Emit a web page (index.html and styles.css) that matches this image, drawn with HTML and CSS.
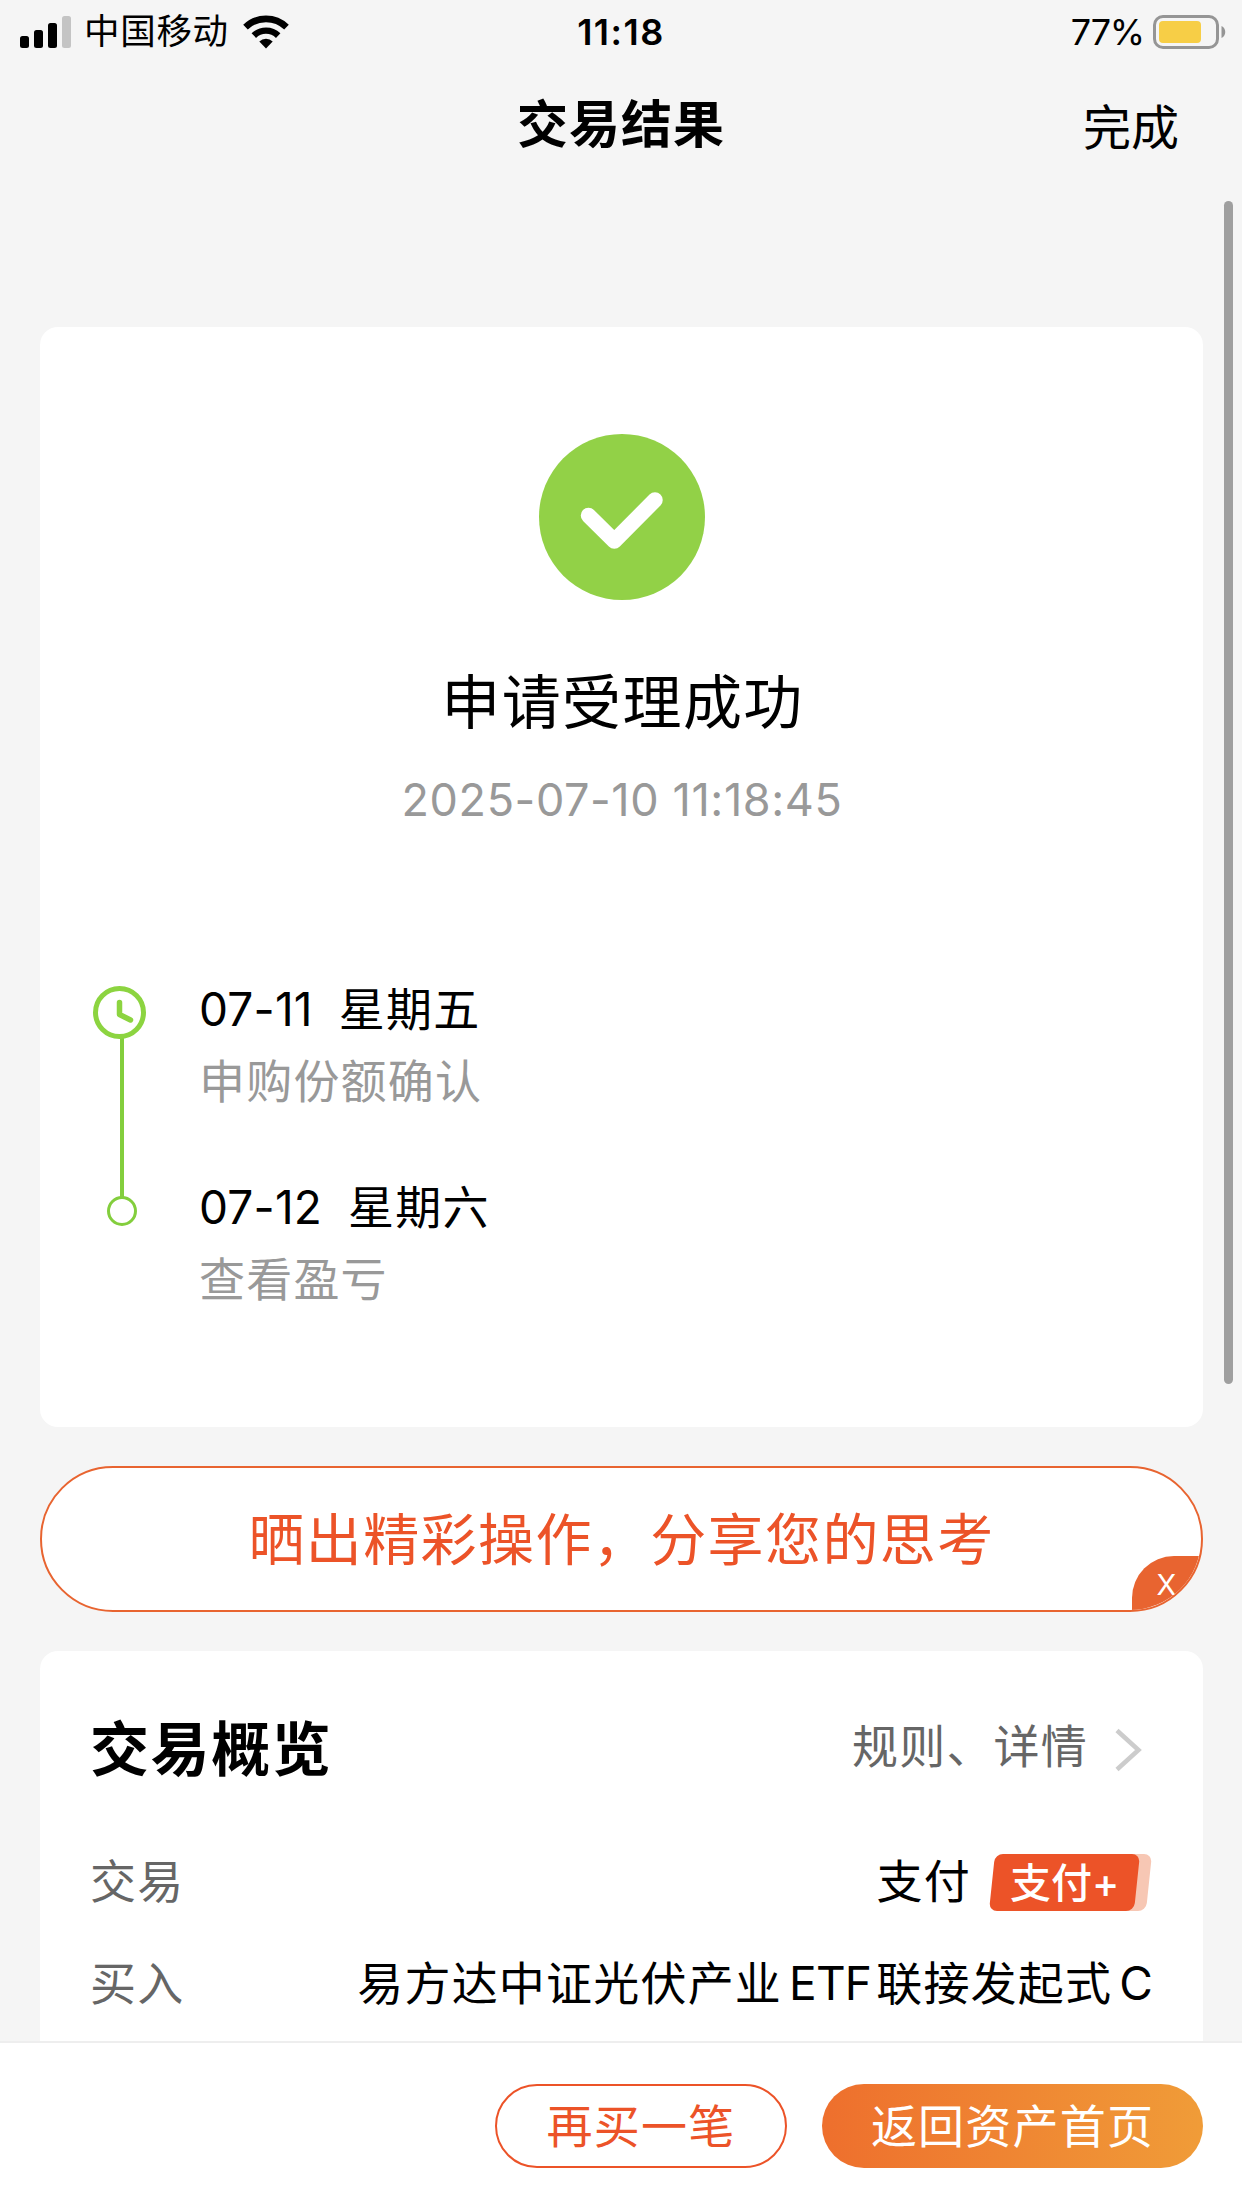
FILE: index.html
```html
<!DOCTYPE html>
<html lang="zh-CN">
<head>
  <meta charset="UTF-8" />
  <meta name="viewport" content="width=device-width, initial-scale=1.0"/>
  <title>交易结果</title>
  <link rel="stylesheet" href="styles.css">
</head>
<body>

  <!-- Status Bar -->
  <div class="status-bar">
    <div class="status-left">
      <svg class="signal" width="52" height="34" viewBox="0 0 52 34">
        <rect x="0" y="21" width="9" height="12" rx="2.5"/>
        <rect x="14" y="15" width="9" height="18" rx="2.5"/>
        <rect x="28" y="8" width="9" height="25" rx="2.5"/>
        <rect x="42" y="1" width="9" height="32" rx="2.5" fill="#c4c4c4"/>
      </svg>
      <span class="carrier">中国移动</span>
      <svg class="wifi" width="46" height="34" viewBox="0 0 46 34">
        <path d="M2.5 12.2a29.5 29.5 0 0 1 41 0" fill="none" stroke="#000" stroke-width="6.6"/>
        <path d="M10.8 20.6a17.5 17.5 0 0 1 24.4 0" fill="none" stroke="#000" stroke-width="6.4"/>
        <path d="M16.3 26.4a9.6 9.6 0 0 1 13.4 0L23 33.4z"/>
      </svg>
    </div>
    <span class="clock">11:18</span>
    <div class="status-right">
      <span>77%</span>
      <svg class="battery" width="74" height="34" viewBox="0 0 74 34">
        <rect x="1.5" y="1.5" width="63" height="31" rx="8.5" fill="none" stroke="#959595" stroke-width="3"/>
        <rect x="6" y="6" width="42" height="22" rx="4" fill="#f7ce46"/>
        <path d="M68.5 11c5 2 5 10 0 12z" fill="#959595"/>
      </svg>
    </div>
  </div>

  <!-- Nav -->
  <div class="nav">
    <h1>交易结果</h1>
    <span class="nav-done">完成</span>
  </div>

  <div class="content">
    <!-- Result -->
    <div class="card result">
      <svg class="success-icon" width="166" height="166" viewBox="0 0 166 166">
        <circle cx="83" cy="83" r="83" fill="#92d147"/>
        <path d="M49.5 81.5L75.3 107 116 66" fill="none" stroke="#fff" stroke-width="15.5" stroke-linecap="round" stroke-linejoin="round"/>
      </svg>
      <h2>申请受理成功</h2>
      <p class="time">2025-07-10 11:18:45</p>

      <div class="timeline">
        <svg class="timeline-line" width="53" height="241" viewBox="0 0 53 241">
          <path d="M29 52v159" stroke="#83ce3d" stroke-width="4"/>
          <circle cx="26.5" cy="26.5" r="24" fill="#fff" stroke="#8cd440" stroke-width="5"/>
          <path d="M26.5 16.5v12L37.5 34" fill="none" stroke="#8cd440" stroke-width="5.5" stroke-linecap="round" stroke-linejoin="round"/>
          <circle cx="29" cy="225" r="13.5" fill="#fff" stroke="#83ce3d" stroke-width="3"/>
        </svg>
        <div class="steps">
          <div class="step">
            <div class="step-date"><span class="num">07-11</span><span>星期五</span></div>
            <div class="step-text">申购份额确认</div>
          </div>
          <div class="step">
            <div class="step-date"><span class="num">07-12</span><span>星期六</span></div>
            <div class="step-text">查看盈亏</div>
          </div>
        </div>
      </div>
    </div>

    <!-- Share -->
    <div class="share">
      <span>晒出精彩操作，分享您的思考</span>
      <div class="share-close">X</div>
    </div>

    <!-- Overview -->
    <div class="card overview">
      <div class="overview-head">
        <h3>交易概览</h3>
        <div class="rules">
          <span>规则、详情</span>
          <svg width="28" height="44" viewBox="0 0 28 44">
            <path d="M3 2.5L24.5 22 3 41.5" fill="none" stroke="#ccc" stroke-width="4.5"/>
          </svg>
        </div>
      </div>
      <div class="row">
        <span class="label">交易</span>
        <div class="value pay">
          <span>支付</span>
          <div class="badge"><span>支付+</span></div>
        </div>
      </div>
      <div class="row">
        <span class="label">买入</span>
        <div class="value">易方达中证光伏产业<span class="latin">ETF</span>联接发起式<span class="latin last">C</span></div>
      </div>
    </div>
  </div>

  <!-- Footer -->
  <div class="footer">
    <button class="btn-outline">再买一笔</button>
    <button class="btn-main">返回资产首页</button>
  </div>

  <div class="scrollbar"></div>

</body>
</html>
```
FILE: styles.css
```css
* {
  box-sizing: border-box;
}

body {
  margin: 0;
  height: 2208px;
  display: flex;
  flex-direction: column;
  overflow: hidden;
  position: relative;
  background: #f5f5f5;
  color: #000;
  font-family: Inter, "Noto Sans CJK SC", sans-serif;
  font-size: 46px;
}

h1, h2, h3, p {
  margin: 0;
}

svg {
  display: block;
  flex: none;
}

.status-bar {
  display: grid;
  grid-template-columns: 1fr auto 1fr;
  align-items: center;
  height: 60px;
  padding: 0 15px 0 20px;
  font-size: 36px;
  line-height: 62px;
}

.status-left {
  display: flex;
  align-items: center;
}

.carrier {
  padding-top: 1px;
  margin-left: 12px;
  font-size: 35.5px;
  letter-spacing: 0.7px;
}

.wifi {
  margin-left: 14px;
}

.clock {
  margin-right: 5px;
  font-weight: 600;
  letter-spacing: 1.5px;
}

.status-right {
  display: flex;
  justify-content: flex-end;
  align-items: center;
  gap: 9px;
  letter-spacing: -1.2px;
}

.nav {
  display: grid;
  grid-template-columns: 1fr auto 1fr;
  align-items: center;
  height: 126px;
  padding: 0 63px 4px;
}

.nav h1 {
  grid-column: 2;
  font-size: 51px;
  font-weight: 700;
  letter-spacing: 1px;
}

.nav-done {
  justify-self: end;
  padding-top: 5px;
  font-size: 48px;
}

.content {
  flex: 1;
  min-height: 0;
  overflow: hidden;
  display: flex;
  flex-direction: column;
  gap: 39px;
  padding: 141px 39px 0 40px;
}

.signal,
.wifi,
.battery {
  margin-top: 1px;
}

.card {
  flex: none;
  background: #fff;
  border-radius: 18px;
}

.result {
  height: 1100px;
  padding: 107px 53px 0;
  display: flex;
  flex-direction: column;
  align-items: center;
}

.result h2 {
  margin-top: 63px;
  padding-left: 2px;
  font-size: 59px;
  line-height: 80px;
  font-weight: 400;
  letter-spacing: 1.4px;
}

.time {
  margin-top: 27px;
  padding-left: 1px;
  font-size: 45px;
  line-height: 60px;
  letter-spacing: 0.6px;
  color: #999;
}

.timeline {
  align-self: stretch;
  display: flex;
  gap: 53px;
  margin-top: 143px;
}

.timeline-line {
  margin-top: 13px;
}

.steps {
  display: flex;
  flex-direction: column;
  gap: 54px;
}

.step {
  line-height: 72px;
  letter-spacing: 1.2px;
}

.step-date {
  display: flex;
  gap: 26px;
}

.num {
  letter-spacing: 0.2px;
}

.step-text {
  color: #999;
}

.share {
  flex: none;
  position: relative;
  height: 146px;
  overflow: hidden;
  border: 2px solid #e86430;
  border-radius: 73px;
  background: #fff;
  color: #ec5328;
  font-size: 56px;
  line-height: 144px;
  letter-spacing: 1.4px;
  text-align: center;
}

/* close tab, clipped by the pill's corner */
.share-close {
  position: absolute;
  right: -2px;
  bottom: -2px;
  width: 71px;
  height: 56px;
  padding-right: 2px;
  border-top-left-radius: 42px;
  background: #e86430;
  color: #fff;
  font-size: 29px;
  line-height: 58px;
  letter-spacing: 0;
}

.overview {
  height: 460px;
  padding: 56px 51px 0 50px;
}

.overview-head {
  display: flex;
  justify-content: space-between;
  align-items: center;
  height: 80px;
  margin-bottom: 45px;
}

.overview h3 {
  padding-bottom: 4px;
  font-size: 59px;
  font-weight: 700;
  letter-spacing: 1.6px;
}

.rules {
  display: flex;
  align-items: center;
  gap: 26px;
  padding-right: 10px;
  color: #666;
  line-height: 78px;
  letter-spacing: 1.2px;
}

.rules span {
  padding-bottom: 2px;
}

.rules svg {
  margin-top: 5px;
}

.row {
  display: flex;
  justify-content: space-between;
  height: 102px;
  line-height: 99px;
  letter-spacing: 1.2px;
}

.label {
  color: #666;
}

.pay {
  display: flex;
  gap: 18px;
}

.badge {
  position: relative;
  width: 163px;
  height: 57px;
  margin-top: 22px;
  padding-left: 21px;
  color: #fff;
  font-size: 41px;
  font-weight: 500;
  line-height: 58px;
  letter-spacing: 0;
}

.badge span {
  position: relative;
  z-index: 1;
}

/* two slanted layers behind the badge text */
.badge::before,
.badge::after {
  content: "";
  position: absolute;
  top: 0;
  left: 3px;
  width: 145px;
  height: 57px;
  border-radius: 8px;
  background: #ec5328;
  transform: skewX(-6deg);
}

.badge::before {
  left: 15px;
  background: #f7c7b4;
}

.latin {
  margin: 0 5px 0 7px;
  letter-spacing: -0.8px;
}

.latin.last {
  margin-right: 0;
}

.footer {
  flex: none;
  display: flex;
  justify-content: flex-end;
  gap: 35px;
  height: 167px;
  padding: 41px 39px 0;
  border-top: 2px solid #eee;
  background: #fff;
}

.footer button {
  height: 84px;
  padding: 0;
  border-radius: 42px;
  font-family: inherit;
  font-size: 46px;
  line-height: 80px;
  letter-spacing: 1.2px;
}

.btn-outline {
  width: 292px;
  border: 2px solid #ec5328;
  background: #fff;
  color: #ec5328;
}

.btn-main {
  width: 381px;
  border: none;
  background: linear-gradient(to right, #ee6f2d, #f09c38);
  color: #fff;
}

.scrollbar {
  position: absolute;
  top: 201px;
  right: 9px;
  width: 9px;
  height: 1183px;
  border-radius: 5px;
  background: #9f9f9f;
}
```
